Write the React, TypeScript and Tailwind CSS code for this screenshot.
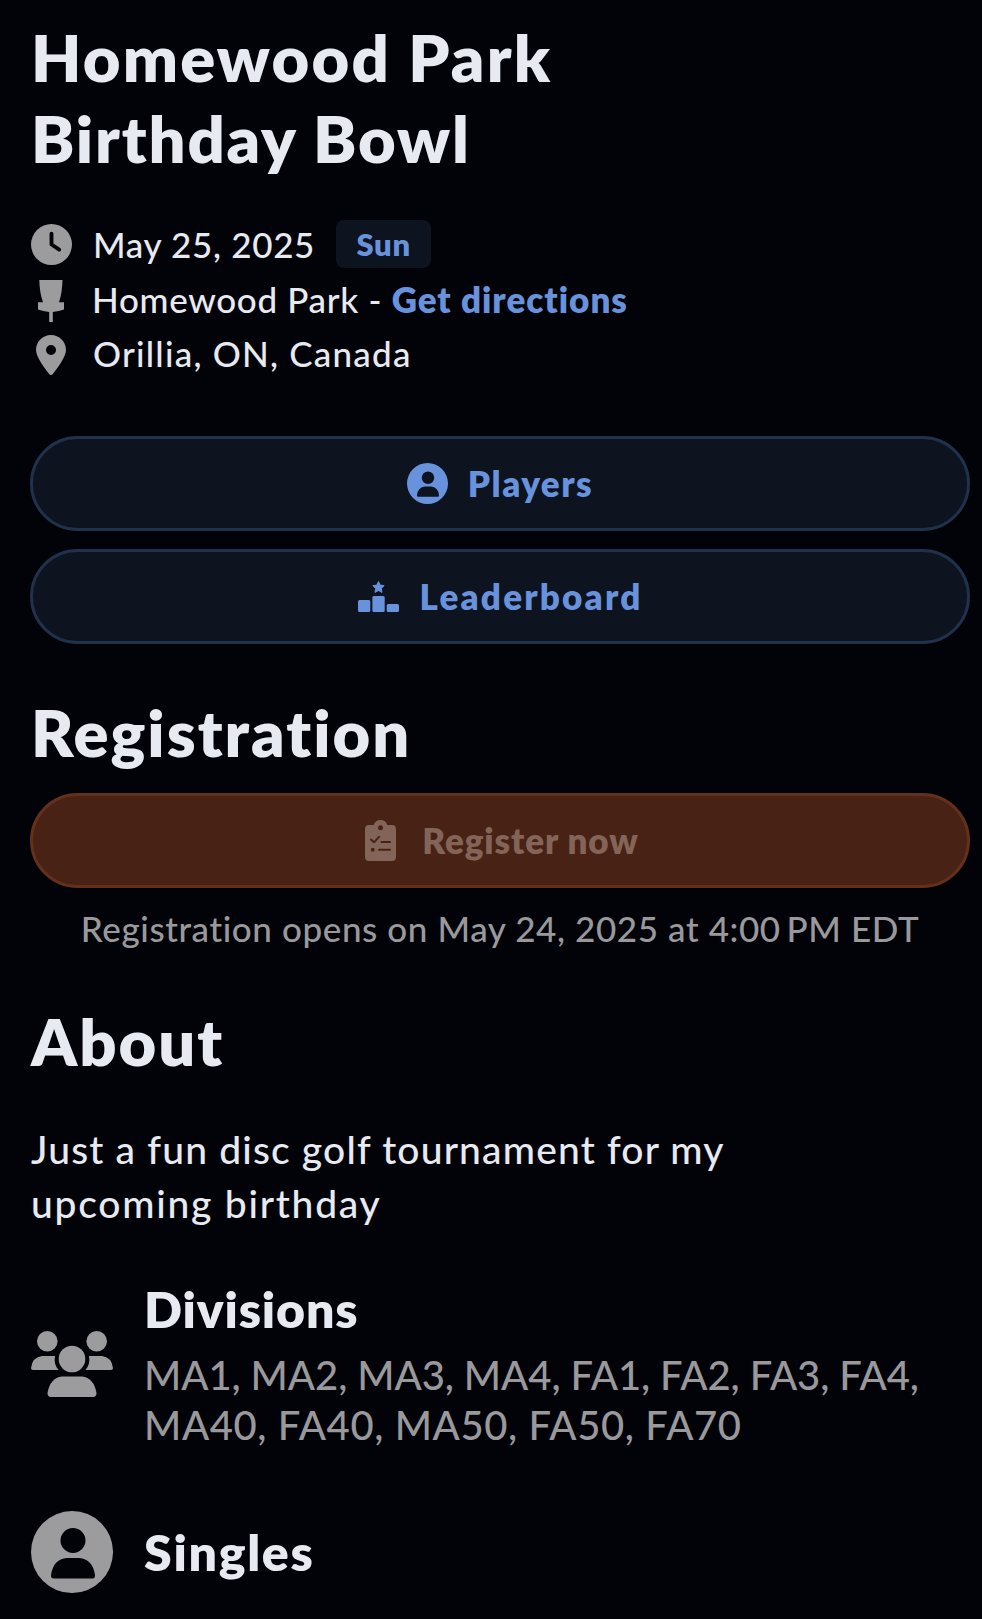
import type { ReactNode } from "react";
import { FaClock, FaLocationDot } from "react-icons/fa6";

type IconProps = { className?: string };

const BasketIcon = ({ className }: IconProps) => (
  <svg viewBox="0 0 26 42" fill="currentColor" className={className}>
    <path d="M1.300 0h23.200q-.3 13-3.500 22.300h5v7.200q-4.800 2-11.200 2.400V42h-3.600V31.900Q4.800 31.500 0 29.500v-7.200h5Q1.600 13 1.300 0z" />
  </svg>
);

const UserIcon = ({ className }: IconProps) => (
  <svg viewBox="0 0 82 82" fill="currentColor" className={className}>
    <path
      fillRule="evenodd"
      d="M41 0a41 41 0 1 1 0 82 41 41 0 0 1 0-82zM42 17a12.500 12.500 0 1 0 0 25 12.500 12.500 0 0 0 0-25zM36 47q-14 1-16 17.500 0 3 2.500 3h39q2.500 0 2.500-3-2-16.500-16-17.500z"
    />
  </svg>
);

const PodiumIcon = ({ className }: IconProps) => (
  <svg viewBox="0 0 41 31" fill="currentColor" className={className}>
    <path
      stroke="currentColor"
      strokeLinejoin="round"
      d="M20.500.5l1.700 3.600 4 .5-2.900 2.800.7 4-3.500-1.900-3.500 1.900.7-4-2.900-2.800 4-.5z"
    />
    <rect x="0" y="19" width="12.300" height="12" rx="1.500" />
    <rect x="14.400" y="15" width="12.300" height="16" rx="1.500" />
    <rect x="28.700" y="23" width="12.300" height="8" rx="1.500" />
  </svg>
);

const ClipboardIcon = ({ className }: IconProps) => (
  <svg viewBox="0 0 31 41" className={className}>
    <path
      fill="currentColor"
      fillRule="evenodd"
      d="M4 5h4.800a7 7 0 0 1 13.400 0H27a4 4 0 0 1 4 4v28a4 4 0 0 1-4 4H4a4 4 0 0 1-4-4V9a4 4 0 0 1 4-4zM15.500 5.200a2.500 2.500 0 1 0 0 5 2.500 2.500 0 0 0 0-5z"
    />
    <g fill="none" stroke="#482215" strokeWidth="2" strokeLinecap="round" strokeLinejoin="round">
      <path d="M6 19.500l3 2.800 5-5.500M16.500 22h8.500M14 29.700h11" />
    </g>
    <rect x="6" y="28" width="3.500" height="3.500" rx="1" fill="#482215" />
  </svg>
);

const GroupIcon = ({ className }: IconProps) => (
  <svg viewBox="0 0 82 66" fill="currentColor" className={className}>
    <circle cx="16.300" cy="10.300" r="10.300" />
    <circle cx="65.700" cy="10.300" r="10.300" />
    <circle cx="41" cy="28" r="13.300" />
    <path d="M11 25h13q-1.500 8 3.500 14H2q-2 0-2-2 1.500-11 11-12z" />
    <path d="M71 25H58q1.500 8-3.500 14H80q2 0 2-2-1.500-11-11-12z" />
    <path d="M31 45.500h20q12 1.500 14.500 16.500 0 4-3.500 4H20q-3.500 0-3.500-4Q19 47 31 45.500z" />
  </svg>
);

const Heading = ({ children, className = "" }: { children: ReactNode; className?: string }) => (
  <h2 className={`pl-px text-[65px] leading-20 font-extrabold tracking-[2px] ${className}`}>{children}</h2>
);

const pill = "flex h-[95px] w-full items-center justify-center rounded-full border-[3px] text-[35px] font-extrabold";

const App = () => {
  return (
    <main className="h-[1619px] overflow-hidden bg-[#020308] pt-[17px] pr-3 pl-[30px] font-['Lato',sans-serif] font-medium text-[#e8eaf2]">
      <h1 className="pl-px text-[65px] leading-[80.500px] font-extrabold">
        <span className="block tracking-[2.200px]">Homewood Park</span>
        <span className="block tracking-[1.850px]">Birthday Bowl</span>
      </h1>

      {/* Event details */}
      <div className="mt-[42px] pl-px text-[35px] tracking-[0.680px]">
        <div className="flex h-12 items-center">
          <FaClock className="size-[41px] text-[#9c9c9f]" />
          <span className="ml-[21px]">May 25, 2025</span>
          <span className="ml-[21px] flex h-12 w-[95px] items-center justify-center rounded-lg bg-[#0d131f] text-[31px] font-extrabold text-[#6892dc]">
            Sun
          </span>
        </div>
        <div className="mt-1 flex h-[54px] items-center">
          <BasketIcon className="mt-1 mr-2 ml-[7px] h-[42px] w-[26px] text-[#9c9c9f]" />
          <span className="ml-5">
            Homewood Park - <a className="font-extrabold tracking-[1px] text-[#6892dc]">Get directions</a>
          </span>
        </div>
        <div className="flex h-[54px] items-center">
          <FaLocationDot className="mt-1 size-10 text-[#9c9c9f]" />
          <span className="ml-[22px] tracking-[1.220px]">Orillia, ON, Canada</span>
        </div>
      </div>

      <div className="mt-14 flex flex-col gap-[18px]">
        <button className={`${pill} border-[#20324b] bg-[#0d131f] tracking-[1.500px] text-[#6892dc]`}>
          <UserIcon className="mr-5 size-[41px]" />
          Players
        </button>
        <button className={`${pill} border-[#20324b] bg-[#0d131f] pl-px tracking-[2.200px] text-[#6892dc]`}>
          <PodiumIcon className="mr-5 h-[31px] w-[41px]" />
          Leaderboard
        </button>
      </div>

      <Heading className="mt-12">Registration</Heading>
      <button disabled className={`${pill} mt-[21px] border-[#65301b] bg-[#482215] pl-1 tracking-[0.900px] text-[#836458]`}>
        <ClipboardIcon className="mr-[26px] h-[41px] w-[31px]" />
        Register now
      </button>
      <p className="mt-[15px] text-center text-[35px] leading-[50px] tracking-[0.600px] text-[#99999c]">
        Registration opens on May 24, 2025 at 4:00<span className="tracking-[-3px]">&#8239;</span>PM EDT
      </p>

      <Heading className="mt-12">About</Heading>
      <p className="mt-[41px] pl-px text-[39px] leading-[54px]">
        <span className="block tracking-[1.170px]">Just a fun disc golf tournament for my</span>
        <span className="block tracking-[1.750px]">upcoming birthday</span>
      </p>

      <div className="mt-[49px] flex items-center pl-px">
        <GroupIcon className="mb-0.5 h-[66px] w-[82px] text-[#9c9c9f]" />
        <div className="ml-[31px]">
          <h3 className="text-[50px] leading-15 font-extrabold tracking-[0.850px]">Divisions</h3>
          <p className="mt-[11px] text-[40px] leading-[50px] tracking-[-0.080px] text-[#99999c]">
            MA1, MA2, MA3, MA4, FA1, FA2, FA3, FA4,
            <br />
            <span className="tracking-[0.600px]">MA40, FA40, MA50, FA50, FA70</span>
          </p>
        </div>
      </div>
      <div className="mt-[61px] flex items-center pl-px">
        <UserIcon className="size-[82px] text-[#9c9c9f]" />
        <h3 className="ml-[31px] text-[50px] leading-15 font-extrabold tracking-[1.700px]">Singles</h3>
      </div>
    </main>
  );
};

export default App;
